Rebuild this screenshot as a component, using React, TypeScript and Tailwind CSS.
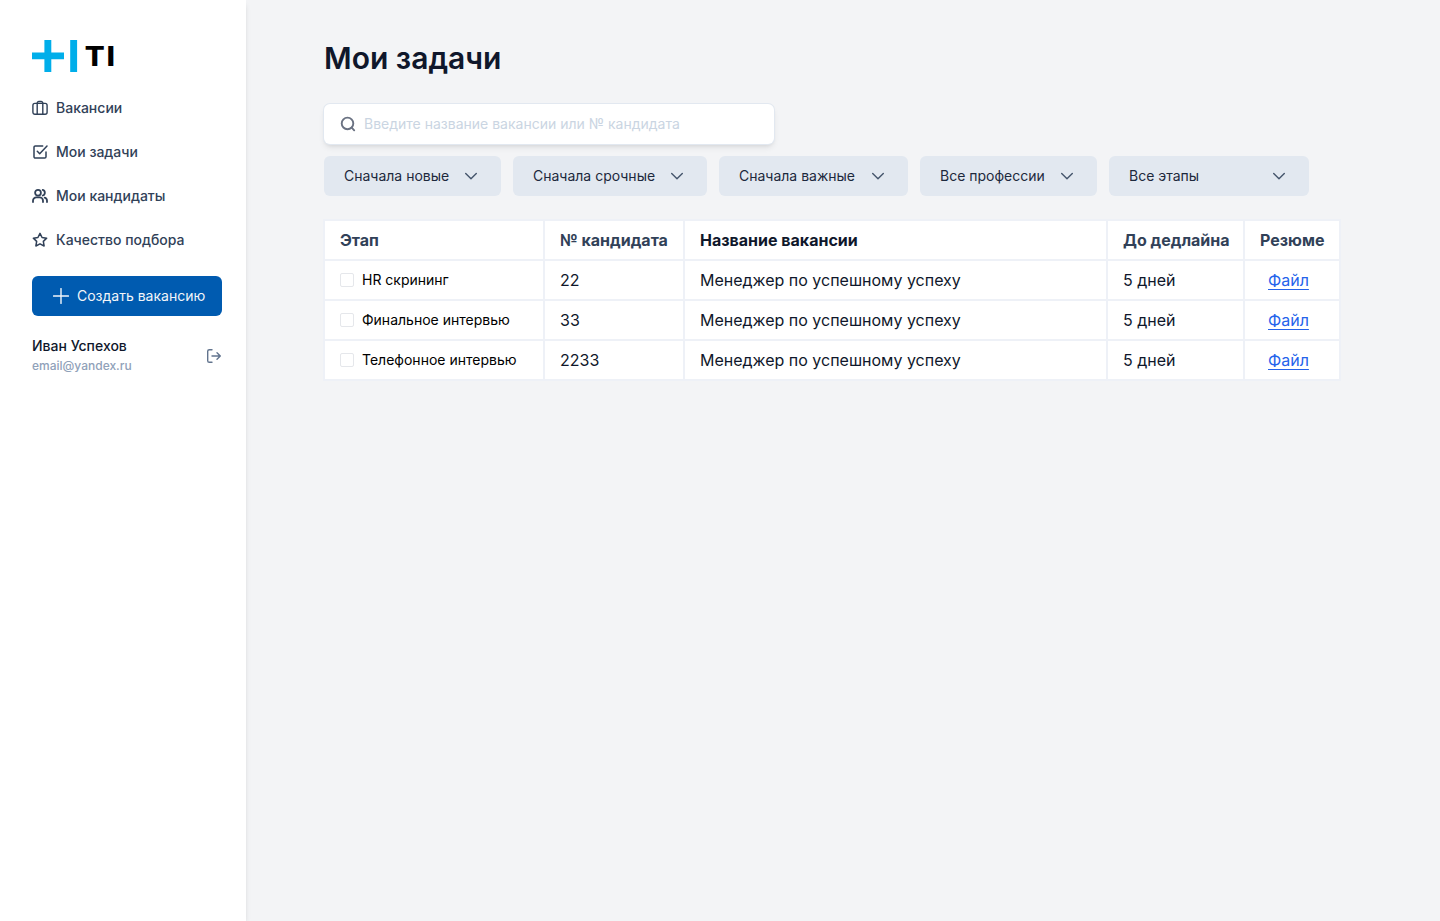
import type { ReactNode } from 'react'

const stroke = {
  fill: 'none',
  stroke: 'currentColor',
  strokeLinecap: 'round' as const,
  strokeLinejoin: 'round' as const,
}

function Icon({ children, width = 1.5 }: { children: ReactNode; width?: number }) {
  return (
    <svg viewBox="0 0 16 16" className="size-4 shrink-0" {...stroke} strokeWidth={width} aria-hidden="true">
      {children}
    </svg>
  )
}

function Logo() {
  return (
    <svg viewBox="0 0 84 32" className="h-8 w-[84px]" role="img" aria-label="TI">
      <path fill="#00aeea" d="M12.4 0h6.9v12.6H32v6.6H19.3V32h-6.9V19.2H0v-6.6h12.4zM38.2 0h6.9v32h-6.9z" />
      <text x="53.5" y="26" fill="#000" className="font-['DejaVu_Sans',sans-serif] text-[27px] font-bold">T</text>
      <text x="73.8" y="26" fill="#000" className="font-['DejaVu_Sans',sans-serif] text-[27px] font-bold">I</text>
    </svg>
  )
}

const nav = [
  {
    label: 'Вакансии',
    icon: (
      <Icon width={1.4}>
        <rect x="0.9" y="3.4" width="14.2" height="10.9" rx="2" />
        <path d="M5.2 14.3V3.2a1.7 1.7 0 0 1 1.7-1.7h2.2a1.7 1.7 0 0 1 1.7 1.7v11.1" />
      </Icon>
    ),
  },
  {
    label: 'Мои задачи',
    icon: (
      <Icon>
        <path d="M5.3 7.3l2.4 2.4L15 2" />
        <path d="M14 8v4.7a1.3 1.3 0 0 1-1.3 1.3H3.300A1.3 1.3 0 0 1 2 12.7V3.3A1.3 1.3 0 0 1 3.3 2h7.4" />
      </Icon>
    ),
  },
  {
    label: 'Мои кандидаты',
    icon: (
      <Icon width={1.8}>
        <circle cx="6" cy="4.7" r="2.9" />
        <path d="M1 14v-1.3a3.3 3.3 0 0 1 3.3-3.3h3.4A3.3 3.3 0 0 1 11 12.7V14M10.7 1.9a2.9 2.9 0 0 1 0 5.6M15 14v-1.3a3.3 3.3 0 0 0-2.3-3.1" />
      </Icon>
    ),
  },
  {
    label: 'Качество подбора',
    icon: (
      <Icon>
        <path d="M8 1.3l2.06 4.18 4.61.67-3.34 3.25.79 4.6L8 11.83 3.88 14l.79-4.6L1.33 6.15l4.61-.67z" />
      </Icon>
    ),
  },
]

const filters = [
  { label: 'Сначала новые', name: 'Дата', width: 'w-[177px]' },
  { label: 'Сначала срочные', name: 'Срочность', width: 'w-[194px]' },
  { label: 'Сначала важные', name: 'Важность', width: 'w-[189px]' },
  { label: 'Все профессии', name: 'Профессия', width: 'w-[177px]' },
  { label: 'Все этапы', name: 'Этап', width: 'w-[200px]' },
]

const tasks = [
  { stage: 'HR скрининг', id: '22' },
  { stage: 'Финальное интервью', id: '33' },
  { stage: 'Телефонное интервью', id: '2233' },
]

const cell = 'border-2 border-[#eef1f7] px-[15px] text-left whitespace-nowrap'

function Sidebar() {
  return (
    <aside className="z-10 flex w-[246px] shrink-0 flex-col bg-white pt-10 pr-6 pl-8 shadow-md">
      <Logo />
      <nav className="mt-6 flex flex-col gap-5">
        {nav.map(({ label, icon }) => (
          <a key={label} href="#" className="flex h-6 items-center gap-2 text-sm font-medium text-slate-700">
            {icon}
            {label}
          </a>
        ))}
      </nav>
      <button type="button" className="mt-6 flex h-10 items-center gap-2 rounded-md bg-[#005bb0] pl-[21px] text-sm text-slate-100">
        <svg viewBox="0 0 16 16" className="size-4 shrink-0" {...stroke} strokeWidth={1.4} aria-hidden="true">
          <path d="M8 .6v14.8M.6 8h14.8" />
        </svg>
        Создать вакансию
      </button>
      <div className="mt-5 flex items-center justify-between">
        <div>
          <p className="text-sm leading-5 font-medium text-slate-900">Иван Успехов</p>
          <p className="text-xs leading-5 font-medium text-slate-400">email@yandex.ru</p>
        </div>
        <button type="button" aria-label="Выйти" className="text-slate-500">
          <Icon width={1.4}>
            <path d="M6 14.3H3.3a1.6 1.6 0 0 1-1.6-1.6V3.3a1.6 1.6 0 0 1 1.6-1.6H6M11 11.3L14.3 8 11 4.7M14.3 8H6" />
          </Icon>
        </button>
      </div>
    </aside>
  )
}

export default function App() {
  return (
    <div className="flex min-h-screen bg-gray-100 font-['Inter',sans-serif]">
      <Sidebar />
      <main className="min-w-0 flex-1 pt-10 pr-[100px] pl-[78px]">
        <h1 className="text-3xl leading-9 font-semibold text-slate-900">Мои задачи</h1>
        <label className="mt-7 flex h-10 w-[450px] items-center gap-2 rounded-md bg-white px-4 shadow-md ring-1 ring-slate-200">
          <svg viewBox="0 0 16 16" className="size-4 shrink-0 text-gray-500" {...stroke} strokeWidth={1.9} aria-hidden="true">
            <circle cx="7.5" cy="7.4" r="5.8" />
            <path d="M11.7 11.7l2.5 2.6" />
          </svg>
          <input
            type="search"
            aria-label="Поиск"
            placeholder="Введите название вакансии или № кандидата"
            className="min-w-0 flex-1 text-sm outline-none placeholder:text-slate-300"
          />
        </label>
        <div className="mt-3 flex flex-wrap gap-3">
          {filters.map(({ label, name, width }) => (
            <div key={name} className={`relative ${width}`}>
              <select
                aria-label={name}
                className="h-10 w-full appearance-none rounded-md bg-slate-200 pr-10 pl-5 text-sm text-slate-800"
              >
                <option>{label}</option>
              </select>
              <svg
                viewBox="0 0 16 16"
                className="pointer-events-none absolute top-3 right-[22px] size-4 text-slate-600"
                {...stroke}
                strokeWidth={1.4}
                aria-hidden="true"
              >
                <path d="M2.7 5.4L8 10.7l5.3-5.3" />
              </svg>
            </div>
          ))}
        </div>
        <div className="-mx-px mt-[23px]">
          <table className="w-full table-fixed border-collapse bg-white text-base text-slate-900">
            <colgroup>
              <col className="w-[220px]" />
              <col className="w-[140px]" />
              <col />
              <col className="w-[137px]" />
              <col className="w-[96px]" />
            </colgroup>
            <thead>
              <tr className="h-10 text-slate-700">
                <th className={cell}>Этап</th>
                <th className={cell}>№ кандидата</th>
                <th className={`${cell} text-slate-900`}>Название вакансии</th>
                <th className={cell}>До дедлайна</th>
                <th className={cell}>Резюме</th>
              </tr>
            </thead>
            <tbody>
              {tasks.map(({ stage, id }) => (
                <tr key={id} className="h-10">
                  <td className={cell}>
                    <label className="flex items-center gap-2 text-sm text-black">
                      <input
                        type="checkbox"
                        className="size-[14px] appearance-none rounded-xs border border-gray-200 checked:bg-[#005bb0]"
                      />
                      {stage}
                    </label>
                  </td>
                  <td className={cell}>{id}</td>
                  <td className={cell}>Менеджер по успешному успеху</td>
                  <td className={cell}>5 дней</td>
                  <td className={cell}>
                    <a href="#" className="mx-2 text-[#2563eb] underline underline-offset-3">
                      Файл
                    </a>
                  </td>
                </tr>
              ))}
            </tbody>
          </table>
        </div>
      </main>
    </div>
  )
}
